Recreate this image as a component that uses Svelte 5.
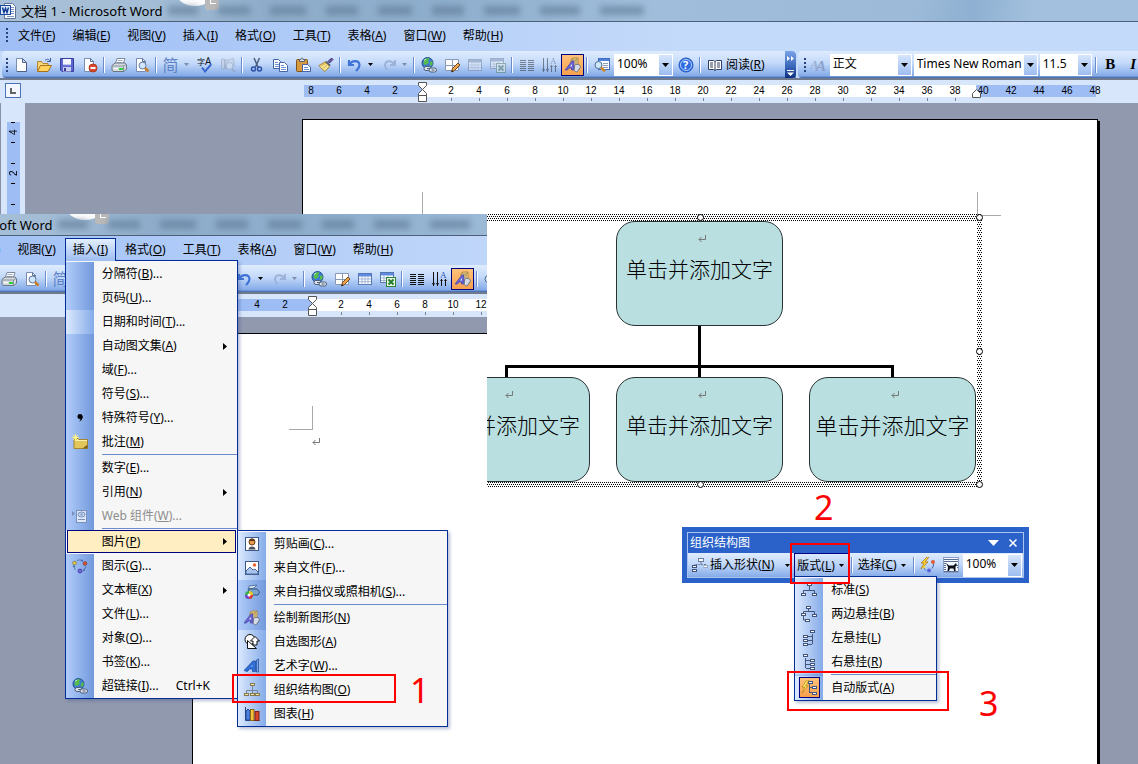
<script>
  const menus = [
    ['文件', 'F'], ['编辑', 'E'], ['视图', 'V'], ['插入', 'I'], ['格式', 'O'],
    ['工具', 'T'], ['表格', 'A'], ['窗口', 'W'], ['帮助', 'H']
  ];

  const pictureMenu = [
    { t: '剪贴画', k: 'C', s: '...', i: 'clipart' },
    { t: '来自文件', k: 'F', s: '...', i: 'picture' },
    { t: '来自扫描仪或照相机', k: 'S', s: '...', i: 'scanner', deep: true },
    { sep: true },
    { t: '绘制新图形', k: 'N', i: 'drawing', deep: true },
    { t: '自选图形', k: 'A', i: 'autoshape' },
    { t: '艺术字', k: 'W', s: '...', i: 'wordart' },
    { t: '组织结构图', k: 'O', i: 'org' },
    { t: '图表', k: 'H', i: 'chart' }
  ];

  const insertMenu = [
    { t: '分隔符', k: 'B', s: '...', deep: true },
    { t: '页码', k: 'U', s: '...', deep: true },
    { t: '日期和时间', k: 'T', s: '...' },
    { t: '自动图文集', k: 'A', arrow: true, deep: true },
    { t: '域', k: 'F', s: '...', deep: true },
    { t: '符号', k: 'S', s: '...', deep: true },
    { t: '特殊符号', k: 'Y', s: '...', i: 'comma', deep: true },
    { t: '批注', k: 'M', i: 'note', deep: true },
    { sep: true },
    { t: '数字', k: 'E', s: '...', deep: true },
    { t: '引用', k: 'N', arrow: true, deep: true },
    { t: 'Web 组件', k: 'W', s: '...', i: 'web', off: true, deep: true },
    { sep: true },
    { t: '图片', k: 'P', arrow: true, hot: true, sub: pictureMenu },
    { t: '图示', k: 'G', s: '...', i: 'diagram', deep: true },
    { t: '文本框', k: 'X', arrow: true, deep: true },
    { t: '文件', k: 'L', s: '...', deep: true },
    { t: '对象', k: 'O', s: '...', deep: true },
    { t: '书签', k: 'K', s: '...', deep: true },
    { t: '超链接', k: 'I', s: '...', i: 'link', key: 'Ctrl+K', deep: true }
  ];

  const layoutMenu = [
    { t: '标准', k: 'S', i: 'layStd' },
    { t: '两边悬挂', k: 'B', i: 'layBoth' },
    { t: '左悬挂', k: 'L', i: 'layLeft' },
    { t: '右悬挂', k: 'R', i: 'layRight' },
    { sep: true },
    { t: '自动版式', k: 'A', i: 'layAuto', on: true }
  ];

  const tools = [
    { i: 'new', l: '新建' }, { i: 'open', l: '打开' }, { i: 'save', l: '保存' }, { i: 'perm', l: '权限' }, '|',
    { i: 'print', l: '打印' }, { i: 'preview', l: '打印预览' }, '|',
    { i: 'simp', l: '简繁转换' }, { dd: true, off: true }, { i: 'spell', l: '拼写和语法' }, { i: 'research', l: '信息检索', off: true }, '|',
    { i: 'cut', l: '剪切' }, { i: 'copy', l: '复制' }, { i: 'paste', l: '粘贴' }, { i: 'brush', l: '格式刷' }, '|',
    { i: 'undo', l: '撤消' }, { dd: true }, { i: 'redo', l: '恢复' }, { dd: true, off: true }, '|',
    { i: 'link', l: '插入超链接' }, { i: 'tables', l: '表格和边框' },
    { i: 'table', l: '插入表格', edit: true }, { i: 'excel', l: '插入 Excel 工作表', edit: true }, '|',
    { i: 'columns', l: '分栏', edit: true }, { i: 'textdir', l: '更改文字方向', edit: true }, { i: 'drawing', l: '绘图', on: true }, '|',
    { i: 'docmap', l: '文档结构图' }
  ];

  const rulerMarks = Array.from({ length: 29 }, (_, n) => n * 2 - 8);
  const smudges = [30, 32, 36, 32, 34, 32, 36, 40, 44];

  const node = (x, y) => `<rect x="${x}.5" y="${y}.5" width="4" height="2" fill="#fff" stroke="#44557c"/>`;

  const icons = {
    word: '<path d="M4.500.5h8l3 3v12h-11z" fill="#fff" stroke="#5d7399"/><path d="M11 4.500h3M11 6.500h3M11 8.500h3M11 10.500h3M7 13.500h7" stroke="#7d98c8"/><rect x=".5" y="2.500" width="10" height="9" fill="#dfe9fa" stroke="#1c4a9c"/><path d="M2.500 4.500l1.500 5 1.500-4 1.500 4 1.500-5" fill="none" stroke="#123c94" stroke-width="1.500"/>',
    new: '<path d="M3.500 1.500h6l4 4v9h-10z" fill="#fff" stroke="#7a8db3"/><path d="M9.500 1.500v4h4z" fill="#c9d6ee" stroke="#566b93"/><path d="M4 14.500h9.500V6" fill="none" stroke="#4a5f8a"/>',
    open: '<path d="M1.500 14V4.500h4l1.500 2h5V9" fill="#f7d777" stroke="#b5832c"/><path d="M1.500 14.500l3-6h11l-3.500 6z" fill="#ffd35c" stroke="#a8721c"/><path d="M9 3.500c2-2 4-1.500 5 .5M14.500 1v3.500H11" fill="none" stroke="#3f5d9b"/>',
    save: '<path d="M1.500 1.500h13v13H3l-1.500-1.500z" fill="#5c66cf" stroke="#383c9d"/><rect x="4" y="2" width="8" height="6" fill="#f4f6ff"/><path d="M4 8h8" stroke="#8b96e4"/><rect x="4" y="10" width="8" height="4.500" fill="#c9cdf0"/><rect x="5" y="11" width="2" height="3" fill="#3b3f93"/>',
    perm: '<path d="M2.500 1.500h6l3 3v10h-9z" fill="#fff" stroke="#7a8db3"/><path d="M8.500 1.500v3h3" fill="none" stroke="#566b93"/><circle cx="11" cy="11" r="4" fill="#d8472b" stroke="#b5391f"/><rect x="8.500" y="10" width="5" height="2" fill="#fff"/>',
    print: '<path d="M4.500 6l1.500-4.500h8L12.500 6" fill="#fff" stroke="#7c89a3"/><path d="M6.500 3.500h5M6 5.500h5" stroke="#9eacc8"/><path d="M1 8.500L4 6h10l1.500 2v4L13 14.500H2L1 13z" fill="#d5dade" stroke="#6b7683"/><path d="M1.500 9h11l2.500-1.500M12.500 9v5" fill="none" stroke="#8b95a2"/><rect x="8" y="11" width="4" height="2" fill="#29d43a"/><path d="M3 11.500h4" stroke="#fff"/>',
    preview: '<path d="M2.500 1.500h6l3 3v10h-9z" fill="#fff" stroke="#7a8db3"/><path d="M8.500 1.500v3h3" fill="none" stroke="#566b93"/><circle cx="8.500" cy="8.500" r="3.500" fill="#cfe6fb" stroke="#62799f"/><path d="M11 11l3.500 3.500" stroke="#c47f28" stroke-width="2.500"/>',
    spell: '<text x="0" y="8" font-size="8" font-family="Noto Sans CJK SC" fill="#10151f">字</text><text x="8" y="8" font-size="10" font-family="Noto Sans" fill="#10151f">A</text><path d="M5 10.500l3 4 6-7" fill="none" stroke="#3a66cf" stroke-width="2"/>',
    research: '<path d="M1.500 2v10h3V2zM5.500 3v9h3V3z" fill="#b9cbe9" stroke="#7f97c3"/><path d="M9.500 2.500l4-1 1 8" fill="#b9cbe9" stroke="#7f97c3"/><circle cx="9.500" cy="9" r="3.500" fill="#d9e6fa" stroke="#8196bd"/><path d="M12 12l3 3" stroke="#8196bd" stroke-width="2"/>',
    cut: '<path d="M5 1l4 9M10.500 1l-4 9" stroke="#4a5c7c" stroke-width="1.500"/><circle cx="4.500" cy="12" r="2" fill="none" stroke="#2c4fa8" stroke-width="1.500"/><circle cx="10.500" cy="12" r="2" fill="none" stroke="#2c4fa8" stroke-width="1.500"/>',
    copy: '<path d="M1.500 2.500h5l2 2v7h-7z" fill="#fff" stroke="#4563a8"/><path d="M3 5.500h3M3 7.500h4M3 9.500h4" stroke="#6f92d8"/><path d="M7.500 5.500h5l3 3v6h-8z" fill="#fff" stroke="#4563a8"/><path d="M9 8.500h3M9 10.500h5M9 12.500h5" stroke="#6f92d8"/>',
    paste: '<rect x="1.500" y="2.500" width="11" height="12" rx="1" fill="#d79a3f" stroke="#7d531b"/><path d="M4.500 4.500v-2h1.500c0-2 2-2 2 0h1.500v2z" fill="#dfe3ea" stroke="#59616e"/><path d="M7.500 7.500h5l3 2.500v4.500h-8z" fill="#fff" stroke="#4563a8"/><path d="M9 10.500h4M9 12.500h5" stroke="#6f92d8"/>',
    brush: '<path d="M10 4.500L13.500 1l1.500 1.500L11.500 6z" fill="#6a56a5" stroke="#443778"/><path d="M7.500 4.500l4.500 4" stroke="#59657c" stroke-width="2"/><path d="M7 5l4.500 4.500L7 14.500C5 13 2.500 11 1 8.500z" fill="#f6e391" stroke="#a58636"/><path d="M3 9l5-3M5 11.500l4.500-4" stroke="#d1ad4e"/>',
    undo: '<path d="M2 3v5h5M2.500 7.500C5 3 12 3 12.500 8c0 3-2 4.500-3.500 6" fill="none" stroke="#3f74d6" stroke-width="2.200"/>',
    redo: '<path d="M14 3v5H9M13.500 7.500C11 3 4.500 3 4 8c0 2.500 1 3.500 2 5" fill="none" stroke="#9db2d8" stroke-width="2"/>',
    link: '<circle cx="6.500" cy="6" r="5.500" fill="#3f7bd0" stroke="#24508f"/><path d="M3 3c2-2.500 5-2 5.500-1L7 4l1 1.500L5 8 2.500 7zM9 5l2.500-1v4L9 9z" fill="#56bd4a"/><path d="M3 3.500l2-1.500" stroke="#d3f3cf"/><rect x="3" y="9.500" width="7" height="4" rx="2" fill="#dfe6ee" stroke="#4d5f78"/><rect x="8" y="11" width="7.500" height="4" rx="2" fill="#dfe6ee" stroke="#4d5f78"/><path d="M6 11.500h3M10.500 13h3" stroke="#4d5f78"/>',
    tables: '<path d="M1.500 2.500h13v11h-13zM1.500 8.500h13M8.500 2.500v11" fill="#fff" stroke="#8a99b5"/><path d="M7.500 15l1-3.500L14 6l2 2-5.500 5.500z" fill="#eda44a" stroke="#77471c"/><path d="M7.500 15l.5-2 1.500 1.500z" fill="#222"/>',
    table: '<rect x="1.500" y="2.500" width="13" height="11" fill="#fff" stroke="#5777b4"/><rect x="2" y="3" width="12" height="2.500" fill="#5e8ae0"/><path d="M2 8h12M2 10.700h12M5 5v8.500M8 5v8.500M11 5v8.500" stroke="#9fb5da"/>',
    excel: '<rect x=".5" y="1.500" width="13" height="10" fill="#fff" stroke="#5777b4"/><rect x="1" y="2" width="12" height="2.500" fill="#5e8ae0"/><path d="M1 7h12M1 9.500h12M4 4v7M8 4v7" stroke="#9fb5da"/><rect x="6.500" y="6.500" width="9" height="9" fill="#e6f5e2" stroke="#2f8438"/><path d="M8.500 8.500l5 5M13.500 8.500l-5 5" stroke="#1f7a2b" stroke-width="1.800"/>',
    columns: '<path d="M1 3.500h6M1 5.500h6M1 7.500h6M1 9.500h6M1 11.500h6M1 13.500h6M9 3.500h6M9 5.500h6M9 7.500h6M9 9.500h6M9 11.500h6M9 13.500h6" stroke="#111"/>',
    textdir: '<path d="M1.500 1v14M5.500 1v14M9.500 8v7M13.500 8v7" stroke="#111"/><path d="M0 12h3l-1.500 3zM4 12h3l-1.500 3zM8 10h3L9.500 8zM12 10h3l-1.500-2z" fill="#111"/><text x="8" y="7" font-size="9" font-family="Liberation Serif" fill="#2d55b8">A</text>',
    drawing: '<path d="M6 2.500l2-1.500h5v6l-2 2H6z" fill="#f3d892" stroke="#a8884a"/><path d="M6 3h5v5M11 3l2-2" fill="none" stroke="#a8884a"/><path d="M0 13L7 4h2v9H6.500v-2H4l-1.500 2z" fill="#6a66d0" stroke="#4540a8" stroke-width=".7"/><path d="M5 9.500l2-2.500v2.500z" fill="#dcdcff"/><path d="M9.500 8.500c2-2 6-1 6 1.500l-3 4.500c-2 1-4-1-3-3z" fill="#d5dbe6" stroke="#6c7588"/>',
    docmap: '<rect x="4.500" y="1.500" width="11" height="11" fill="#fff" stroke="#3e6cbb"/><rect x="5" y="2" width="10" height="2" fill="#4f82dc"/><path d="M9 6.500h5M9 8.500h5M9 10.500h5" stroke="#8b9cbd"/><circle cx="4.500" cy="8" r="3.500" fill="#cfeaf7" stroke="#4a6b94"/><path d="M7 10.500l4 4" stroke="#cf8a2a" stroke-width="2.500"/>',
    help: '<circle cx="8" cy="8" r="7" fill="#2d6be0" stroke="#2458c0"/><circle cx="8" cy="8" r="5.500" fill="none" stroke="#b5d0fb"/><text x="5" y="12" font-size="11" font-weight="700" font-family="Noto Sans" fill="#fff">?</text>',
    book: '<path d="M1.500 3.500h5l1.500 1 1.500-1h5v9h-5l-1.500 1-1.500-1h-5z" fill="#fff" stroke="#2e3f63"/><path d="M8 4.500v9M3 6h3M3 8h3M3 10h3M10 6h3M10 8h3M10 10h3" stroke="#2e3f63"/>',
    styles: '<text x="0" y="12" font-size="13" font-style="italic" font-weight="700" font-family="Liberation Serif" fill="#98add3">A</text><text x="6" y="14" font-size="15" font-style="italic" font-weight="700" font-family="Liberation Serif" fill="#8ba1c9">A</text>',
    clipart: '<rect x="1.500" y="1.500" width="13" height="13" fill="#fff" stroke="#3d5888"/><path d="M4.500 13.500c0-4 7-4 7 0z" fill="#4b4f5a"/><circle cx="8" cy="6" r="3" fill="#e59a4e" stroke="#6c3e18"/><path d="M5 5c0-3.500 6-3.500 6 0z" fill="#5d3718"/>',
    picture: '<rect x="1.500" y="1.500" width="13" height="13" fill="#fff" stroke="#3d5888"/><path d="M2 14V11l4-4 3 3 2-1 3 3v2z" fill="#a9c3ec" stroke="#4c6ba2"/><circle cx="10.500" cy="5" r="1.700" fill="#e8642d"/>',
    scanner: '<path d="M5 2l8-1-3 3-5 1z" fill="#dce8f5" stroke="#53749d"/><path d="M4 5h9l2.500 3-1.500 3H7z" fill="#7ba5cf" stroke="#31547e"/><circle cx="5" cy="11" r="4" fill="#36ad50"/><path d="M5 7a4 4 0 0 1 4 4H5z" fill="#e8c928"/><path d="M9 11a4 4 0 0 1-4 4v-4z" fill="#db3a46"/><path d="M5 15a4 4 0 0 1-4-4h4z" fill="#7146cf"/><circle cx="5" cy="11" r="1.500" fill="#fff"/>',
    autoshape: '<circle cx="6" cy="5.500" r="5" fill="#fff" stroke="#111"/><path d="M3.500 6.500l9 8h-9z" fill="#fff" stroke="#111"/><path d="M11 2.500L15.500 7H13v4H9V7H6.500z" fill="#fff" stroke="#111"/>',
    wordart: '<path d="M0 12.500L9 3h2.500v10.500H8.500v-2.500H5.500l-2 2.500z" fill="#2f6fd6" stroke="#1a4596" stroke-width=".7"/><path d="M7 8.500L8.500 7v1.500z" fill="#d8e8ff"/><path d="M12.500 2l2-1v13h-2z" fill="#77a6ec" stroke="#1a4596" stroke-width=".7"/>',
    org: '<path d="M8.500 4v4M2.500 11V8.500h11V11M8.500 8v3" fill="none" stroke="#7686a2"/><rect x="6.500" y="1.500" width="4" height="2" fill="#f5e5a0" stroke="#857a4f"/><rect x=".5" y="11.500" width="4" height="2" fill="#f5e5a0" stroke="#857a4f"/><rect x="6.500" y="11.500" width="4" height="2" fill="#f5e5a0" stroke="#857a4f"/><rect x="11.500" y="11.500" width="4" height="2" fill="#f5e5a0" stroke="#857a4f"/>',
    chart: '<path d="M1.500 1v13.500h14" fill="none" stroke="#2c437a"/><path d="M2 5l2-2 2 2v9H2z" fill="#4b80de" stroke="#23489a"/><rect x="6.500" y="3.500" width="3.500" height="11" fill="#f2c63c" stroke="#8d6918"/><rect x="11" y="5.500" width="4" height="9" fill="#d8442b" stroke="#7e2012"/>',
    comma: '<circle cx="8" cy="6.500" r="2.500"/><path d="M10.500 6c.5 3-1 4.500-3.500 5.500 1.500-1.500 2-3 1.500-4.500z"/>',
    note: '<path d="M2 4.500h4l1 1h8.500V14.500H2z" fill="#e3c659" stroke="#a3872e"/><path d="M3 6.500h12" stroke="#fbf0ac"/><path d="M10.500 14.500l5-4v4z" fill="#7c641a"/><path d="M3.500 0v7M0 3.500h7M1 1l5 5M6 1L1 6" stroke="#fdf08a"/>',
    web: '<path d="M0 3l3 2.500L0 8z" fill="#7790c0"/><rect x="4.500" y="2.500" width="10" height="12" fill="#dfe9f9" stroke="#7990bb"/><ellipse cx="9.500" cy="6.500" rx="3.500" ry="2.500" fill="#c3d3ee" stroke="#7990bb"/><circle cx="9.500" cy="6.500" r="1" fill="#7990bb"/><path d="M6 11.500h7" stroke="#7990bb"/>',
    diagram: '<path d="M5 2.500a6 6 0 0 1 5 0M14 8a6 6 0 0 1-2 4M3.500 12a6 6 0 0 1-1.500-4" fill="none" stroke="#5d7cb4"/><path d="M9.500 1v3l2-1zM12.500 10v3h-2zM0.500 9l1.500-2 1.500 2z" fill="#3d64a8"/><circle cx="2.500" cy="5" r="1.800" fill="#e8d24a" stroke="#78682a" stroke-width=".7"/><circle cx="13" cy="5.500" r="1.800" fill="#e05a38" stroke="#802a18" stroke-width=".7"/><circle cx="8" cy="13" r="2" fill="#6e66e0" stroke="#37309a" stroke-width=".7"/>',
    shape: '<rect x="6.500" y="1.500" width="5" height="3" fill="#fff" stroke="#6b7c9d"/><path d="M9 5v2.500H2.500V10M9 7.500h5V10" fill="none" stroke="#6b7c9d" stroke-dasharray="2 1"/><rect x="12" y="8.500" width="3.500" height="2" fill="#fff" stroke="#9aa9c6"/><rect x=".5" y="8.500" width="4" height="2" fill="#fff" stroke="#44557c"/><rect x=".5" y="12.500" width="4" height="2" fill="#fff" stroke="#44557c"/>',
    layStd: '<path d="M8.500 4v4M2.500 11V8.500h11V11" fill="none" stroke="#44557c"/>' + node(6, 1) + node(0, 11) + node(11, 11),
    layBoth: '<path d="M7.500 3v3M2.500 7V5.500h11V8M2.500 10v4h2" fill="none" stroke="#44557c"/>' + node(5, 0) + node(0, 7) + node(11, 8) + node(4, 13),
    layLeft: '<path d="M11.500 4v10M6 6.500h5M6 10.500h5M6 14.500h5" fill="none" stroke="#44557c"/>' + node(9, 0) + node(2, 5) + node(2, 9) + node(2, 13),
    layRight: '<path d="M4.500 4v10M5 6.500h5M5 10.500h5M5 14.500h5" fill="none" stroke="#44557c"/>' + node(2, 0) + node(9, 5) + node(9, 9) + node(9, 13),
    layAuto: '<path d="M8.500 4v9M9 7.500h3M9 12.500h3" fill="none" stroke="#44557c"/>' + node(7, 1) + node(11, 6) + node(11, 12) + '<path d="M6 0L1 7h3l-3 6 6-7H4.500L8 0z" fill="#fff36b" stroke="#ad7d10" stroke-width=".7"/>',
    autofmt: '<path d="M7 0L1 6h3L1 12l7-7H5l4-5z" fill="#ffd83d" stroke="#b07412" stroke-width=".8"/><path d="M13.500 7a6 6 0 0 1-1.500 4.500M4 10.500a5 5 0 0 0 2 3" fill="none" stroke="#3d64a8"/><circle cx="13" cy="5" r="2" fill="#dd5c38"/><circle cx="9" cy="13.500" r="2" fill="#5c62dd"/><circle cx="4" cy="10" r="1.500" fill="#e8d24a"/>',
    wrap: '<rect x=".5" y=".5" width="15" height="15" fill="#f3f7ff" stroke="#8aa0c8"/><path d="M1 2.500h14M1 4.500h14M1 6.500h2M1 8.500h2M1 10.500h2M14 8.500h1M14 10.500h1M1 14.500h14M1 12.500h2" stroke="#5b6d94"/><path d="M3 6l3 2.500h4.500L13 6l1 2.500-1.500 1V14H11l-.5-2.500H7L6 14H4.500l.5-4z" fill="#0b0f18"/>'
  };
</script>

{#snippet icon(name)}
  <svg class="ico" viewBox="0 0 16 16" aria-hidden="true">{@html icons[name]}</svg>
{/snippet}

{#snippet label(t, k, s)}<span>{t}(<u>{k}</u>){s ?? ''}</span>{/snippet}

{#snippet down()}
  <svg class="down" viewBox="0 0 5 3" aria-hidden="true"><path d="M0 0h5L2.500 3z" fill="currentColor" /></svg>
{/snippet}

{#snippet combo(kind, value, name)}
  <span class="combo {kind}">
    <select aria-label={name}><option>{value}</option></select>
    <span class="combo-arrow"><svg viewBox="0 0 7 4" aria-hidden="true"><path d="M0 0h7L3.500 4z" /></svg></span>
  </span>
{/snippet}

{#snippet popup(items, kind)}
  <ul class="popup {kind}">
    {#each items as m}
      {#if m.sep}
        <li class="rule"></li>
      {:else}
        <li class="entry">
          <button class="row" class:hot={m.hot} class:deep={m.deep} disabled={m.off}>
            <span class="gutter">
              {#if m.i}<span class="cell" class:on={m.on}>{@render icon(m.i)}</span>{/if}
            </span>
            {@render label(m.t, m.k, m.s)}
            {#if m.key}<span class="key">{m.key}</span>{/if}
            {#if m.arrow}<svg class="more" viewBox="0 0 4 7" aria-hidden="true"><path d="M0 0l4 3.500L0 7z" /></svg>{/if}
          </button>
          {#if m.sub}{@render popup(m.sub, 'flyout')}{/if}
        </li>
      {/if}
    {/each}
  </ul>
{/snippet}

{#snippet mark(kind)}
  <svg class="return {kind}" viewBox="0 0 8 8" aria-hidden="true"><path d="M7.500 0v4.500H1M3.500 2L1 4.500 3.500 7" fill="none" stroke="#777" /></svg>
{/snippet}

{#snippet box(big)}
  <div class="box" class:big>
    {@render mark('inbox')}
    <span>单击并添加文字</span>
  </div>
{/snippet}

{#snippet wordWindow(front)}
  <section class="window">
    <header class="title">
      {@render icon('word')}
      <h1>文档 1 - Microsoft Word</h1>
      <span class="blob"></span>
      <span class="chip"></span>
      <span class="smudges">
        {#each smudges as w}<i style="width:{w}px"></i>{/each}
      </span>
    </header>
    <nav class="menubar">
      <span class="grip"></span>
      {#each menus as [t, k]}
        <div class="menu">
          <button class="head" class:open={front && k === 'I'}>{@render label(t, k)}</button>
          {#if front && k === 'I'}{@render popup(insertMenu, 'insert')}{/if}
        </div>
      {/each}
    </nav>
    <div class="bars">
      <div class="bar" role="toolbar">
        <span class="grip"></span>
        {#each tools as b}
          {#if b === '|'}
            <span class="split"></span>
          {:else if b.dd}
            <button class="dd" class:off={b.off} aria-label="更多">{@render down()}</button>
          {:else}
            <button class="tool" class:on={b.on} class:off={b.off || (b.edit && !front)} aria-label={b.l}>
              {#if b.i === 'simp'}<span class="simp">简</span>{:else}{@render icon(b.i)}{/if}
            </button>
          {/if}
        {/each}
        {@render combo('zoom', '100%', '显示比例')}
        <button class="tool" aria-label="帮助">{@render icon('help')}</button>
        <span class="split"></span>
        <button class="read">{@render icon('book')}{@render label('阅读', 'R')}</button>
        <button class="overflow" aria-label="工具栏选项">
          <svg viewBox="0 0 11 27" aria-hidden="true"><path d="M2 5l3 2.500L2 10zM6 5l3 2.500L6 10zM2 19h7v1H2zM2 21.500h7L5.500 25z" fill="#fff" /></svg>
        </button>
      </div>
      <div class="bar last" role="toolbar">
        <span class="grip"></span>
        <button class="tool" aria-label="格式窗格">{@render icon('styles')}</button>
        {@render combo('style', '正文', '样式')}
        {@render combo('font', 'Times New Roman', '字体')}
        {@render combo('size', '11.5', '字号')}
        <span class="split"></span>
        <button class="tool bold">B</button>
        <button class="tool italic">I</button>
      </div>
    </div>
    <div class="ruler">
      <button class="tab" aria-label="制表符"></button>
      <ol>
        {#each rulerMarks as n}
          <li class:tick={n > 0 && n < 40}>
            {#if n !== 0}{Math.abs(n)}{:else}
              <svg class="glass" viewBox="0 0 10 20" aria-hidden="true">
                <path d="M.5.5h8v3l-4 4-4-4zM4.500 7.500l4 4v2h-8v-2zM.5 13.500h8v6h-8z" fill="#fff" stroke="#555" />
              </svg>
            {/if}
            {#if n === 40}
              <svg class="stop" viewBox="0 0 9 9" aria-hidden="true"><path d="M.5 8.500V4.500l4-4 4 4v4z" fill="#fff" stroke="#555" /></svg>
            {/if}
          </li>
        {/each}
      </ol>
    </div>
    <div class="work">
      <div class="vruler">
        <div class="scale"><b>4</b><b>2</b><b></b></div>
      </div>
      <div class="desk">
        <article class="page">
          <i class="crop left"></i>
          <i class="crop right"></i>
          {#if front}
            {@render mark('para')}
          {:else}
            <div class="canvas">
              <svg class="hatch" viewBox="0 0 562 274" shape-rendering="crispEdges" aria-hidden="true">
                <defs>
                  <pattern id="dots" width="2" height="4" patternUnits="userSpaceOnUse">
                    <rect width="1" height="1" /><rect x="1" y="2" width="1" height="1" />
                  </pattern>
                </defs>
                <path d="M0 0h562v274H0v-7h557V7H0z" fill="url(#dots)" />
              </svg>
              <div class="tree">
                <div class="tier">{@render box(false)}</div>
                <svg class="wires" viewBox="0 0 553 51" aria-hidden="true">
                  <path d="M276.500 0v51M83.500 51V40.500h386v10.500" fill="none" stroke="#000" stroke-width="3" />
                </svg>
                <div class="tier">{@render box(false)}{@render box(false)}{@render box(true)}</div>
              </div>
              <i class="knob n"></i><i class="knob ne"></i><i class="knob e"></i><i class="knob se"></i><i class="knob s"></i>
            </div>
          {/if}
        </article>
      </div>
    </div>
  </section>
{/snippet}

<main>
  {@render wordWindow(false)}
  <div class="front">{@render wordWindow(true)}</div>

  <section class="float">
    <header>
      <h2>组织结构图</h2>
      <svg class="opts" viewBox="0 0 11 6" aria-hidden="true"><path d="M0 0h11L5.500 6z" fill="#fff" /></svg>
      <button class="close" aria-label="关闭"><svg viewBox="0 0 8 8" aria-hidden="true"><path d="M.5.5l7 7M7.500.5l-7 7" stroke="#fff" stroke-width="1.500" /></svg></button>
    </header>
    <div class="float-row">
      <button class="cmd wide">{@render icon('shape')}{@render label('插入形状', 'N')}{@render down()}</button>
      <div class="menu">
        <button class="cmd open">{@render label('版式', 'L')}{@render down()}</button>
        {@render popup(layoutMenu, 'layout')}
      </div>
      <span class="split"></span>
      <button class="cmd">{@render label('选择', 'C')}{@render down()}</button>
      <span class="split"></span>
      <button class="tool" aria-label="自动套用格式">{@render icon('autofmt')}</button>
      <button class="tool" aria-label="文字环绕">{@render icon('wrap')}</button>
      {@render combo('fzoom', '100%', '缩放')}
    </div>
  </section>

  <i class="ring one"></i><b class="step one">1</b>
  <i class="ring two"></i><b class="step two">2</b>
  <i class="ring three"></i><b class="step three">3</b>
</main>

<style>
  :global(body) { margin: 0; }
  main, main :global(*) { box-sizing: border-box; }
  main {
    position: relative;
    height: 100vh;
    overflow: hidden;
    font: 12px/16px "Noto Sans", "Noto Sans CJK SC", sans-serif;
    color: #000;
  }
  button {
    border: 0;
    padding: 0;
    margin: 0;
    background: none;
    font: inherit;
    color: inherit;
    white-space: nowrap;
  }
  h1, h2 { margin: 0; font: inherit; white-space: nowrap; }
  ul, ol { margin: 0; padding: 0; list-style: none; }
  u { text-underline-offset: 1px; text-decoration-thickness: 1px; }
  svg { display: block; flex: none; }
  .ico { width: 16px; height: 16px; }
  .down { width: 5px; height: 3px; }

  .window {
    display: flex;
    flex-direction: column;
    height: 100%;
    background: #d8e6fb;
  }

  .title {
    position: relative;
    display: flex;
    align-items: center;
    gap: 5px;
    height: 22px;
    overflow: hidden;
    border-bottom: 1px solid #4d6079;
    background: linear-gradient(100deg, #a9c1d8 0, #a3bdd6 150px, #8fadcb 260px, #8eaecd 440px, #a0bedb 640px, #9dbbd9 900px, #8fb0d2 960px, #a3c1de 1020px);
  }
  .title h1 { font-size: 13px; }
  .blob {
    position: absolute;
    left: 176px;
    top: -22px;
    width: 38px;
    height: 28px;
    border-radius: 50%;
    background: #fdfdfd;
  }
  .chip {
    position: absolute;
    left: 205px;
    top: -4px;
    width: 14px;
    height: 14px;
    border-radius: 3px;
    background: #b9b9b9;
  }
  .chip::after {
    content: "";
    position: absolute;
    left: 5px;
    top: 2px;
    width: 5px;
    height: 5px;
    border: solid #fff;
    border-width: 0 0 1px 1px;
  }
  .smudges {
    display: flex;
    gap: 20px;
    filter: blur(3px);
  }
  .smudges i { height: 9px; background: #5b7893; opacity: .6; }

  .menubar {
    display: flex;
    align-items: flex-start;
    gap: 1px;
    height: 29px;
    padding: 2px 0 0 4px;
    background: linear-gradient(90deg, #9ebef5, #c4dafa 60%, #c4dafa);
  }
  .grip {
    flex: none;
    width: 5px;
    height: 14px;
    background: repeating-linear-gradient(#27417a 0 2px, transparent 2px 4px) 2px 0 / 2px 100% no-repeat;
  }
  .menubar .grip { margin-top: 4px; }
  .menu { position: relative; }
  .head { height: 23px; padding: 0 7px; border: 1px solid transparent; }
  .head.open {
    position: relative;
    z-index: 12;
    border-color: #002d96;
    border-bottom: 0;
    background: linear-gradient(#e3effe, #9dbdf0);
  }

  .bars { display: flex; height: 29px; border-bottom: 2px solid #6f7a8c; background: #c4dafa; }
  .bar {
    display: flex;
    align-items: center;
    height: 27px;
    padding-left: 2px;
    margin-left: 2px;
    border-radius: 4px 0 0 4px;
    background: linear-gradient(#dfecfe, #c3d9fa 45%, #84abe8 92%, #3b62a5);
  }
  .bar.last { flex: 1; padding-left: 4px; overflow: hidden; }
  .tool {
    flex: none;
    display: flex;
    align-items: center;
    justify-content: center;
    width: 23px;
    height: 22px;
  }
  .tool.on, .cell.on { border: 1px solid #000080; background: linear-gradient(#ffc27a, #f7a04d); }
  .tool.off .ico { filter: grayscale(.6); opacity: .45; }
  .simp { font-size: 16px; line-height: 20px; color: #5f83c6; }
  .dd { flex: none; width: 11px; height: 22px; padding-left: 2px; }
  .off { color: #7d8ba8; }
  .split {
    flex: none;
    width: 6px;
    height: 16px;
    background: linear-gradient(90deg, transparent 2px, #6a8ccb 2px 3px, #fff 3px 4px, transparent 4px);
  }
  .read { display: flex; align-items: center; gap: 3px; height: 22px; padding: 0 20px 0 4px; }
  .overflow {
    width: 11px;
    height: 27px;
    border-radius: 0 4px 4px 0;
    background: linear-gradient(#7aa3ea, #3663b5 60%, #0b2f80);
  }
  .overflow svg { width: 11px; height: 27px; }

  .combo { display: grid; flex: none; height: 22px; background: #fff; }
  .combo select {
    grid-area: 1 / 1;
    min-width: 0;
    appearance: none;
    border: 1px solid #fff;
    border-radius: 0;
    padding: 0 15px 2px 2px;
    background: #fff;
    font: inherit;
    color: #000;
    text-overflow: clip;
  }
  .combo-arrow {
    grid-area: 1 / 1;
    justify-self: end;
    display: flex;
    align-items: center;
    justify-content: center;
    width: 13px;
    margin: 1px;
    background: linear-gradient(#d6e5fc, #9dbdf0);
    pointer-events: none;
  }
  .combo-arrow svg { width: 7px; height: 4px; }
  .zoom { width: 59px; margin: 0 1px; }
  .style { width: 82px; margin-right: 2px; }
  .font { width: 124px; margin-right: 2px; }
  .size { width: 52px; margin-right: 1px; }
  .bold, .italic { font: 700 15px "Liberation Serif", serif; }
  .italic { font-style: italic; }

  .ruler {
    display: flex;
    align-items: flex-start;
    height: 23px;
    padding: 3px 0 0 5px;
    overflow: hidden;
  }
  .tab {
    flex: none;
    width: 16px;
    height: 15px;
    border: 1px solid #4a72b8;
    background: linear-gradient(#666, #666) 4px 4px / 2px 6px no-repeat, linear-gradient(#666, #666) 4px 8px / 6px 2px no-repeat, #f1f6ff;
  }
  .ruler ol {
    display: flex;
    flex: none;
    margin: 2px 0 0 276px;
    font: 10px/12px "Liberation Sans", sans-serif;
    background: linear-gradient(90deg, transparent 7px, #9ebdf5 7px 126px, #fff 126px 679px, #9ebdf5 679px 799px, transparent 799px) 0 0 / 100% 12px no-repeat;
  }
  .ruler li { position: relative; width: 28px; height: 18px; text-align: center; }
  .tick::after {
    content: "";
    display: block;
    width: 1px;
    height: 3px;
    margin: 1px auto 0;
    background: #7b8494;
  }
  .glass { position: absolute; left: 9px; top: -3px; width: 10px; height: 20px; }
  .stop { position: absolute; left: 3px; top: 4px; width: 9px; height: 9px; }

  .work { display: flex; flex: 1; min-height: 0; }
  .vruler {
    flex: none;
    width: 25px;
    padding: 19px 5px 0 6px;
    border-left: 1px solid #8791a5;
  }
  .scale {
    display: flex;
    flex-direction: column;
    gap: 20px;
    height: 100%;
    width: 13px;
    overflow: hidden;
    background: #9ebdf5;
    font: 10px/12px "Liberation Sans", sans-serif;
  }
  .scale b {
    display: flex;
    align-items: center;
    justify-content: center;
    flex: none;
    height: 21px;
    font-weight: 400;
    writing-mode: vertical-rl;
    transform: rotate(180deg);
    background: linear-gradient(#000, #000) center top / 4px 1px no-repeat, linear-gradient(#000, #000) center bottom / 4px 1px no-repeat;
  }
  .desk { flex: 1; padding: 16px 0 0 277px; background: #9199ae; overflow: hidden; }
  .page {
    position: relative;
    width: 796px;
    height: 100%;
    padding: 94px 0 0 117px;
    border: solid #000;
    border-width: 1px 1px 0 1px;
    background: #fff;
    box-shadow: 2px 2px 0 #000;
  }
  .crop { position: absolute; top: 72px; width: 24px; height: 24px; border: 0 solid #a9a9a9; border-bottom-width: 1px; }
  .crop.left { left: 96px; border-right-width: 1px; }
  .crop.right { left: 674px; border-left-width: 1px; }
  .return { width: 8px; height: 8px; }
  .para { margin: 10px 0 0 2px; }
  .inbox { margin-left: 5px; }

  .canvas {
    position: relative;
    width: 562px;
    height: 274px;
    padding: 7px 0 0 3px;
  }
  .tree { position: relative; width: 553px; }
  .tier { display: flex; justify-content: center; gap: 26px; }
  .wires { width: 553px; height: 51px; }
  .box {
    display: flex;
    flex-direction: column;
    align-items: center;
    gap: 11px;
    flex: none;
    width: 167px;
    height: 105px;
    padding: 13px 0 0;
    border: 1px solid #2a3334;
    border-radius: 19px;
    background: #b9dfe1;
    font: 300 21px/28px "Noto Sans CJK SC", sans-serif;
    white-space: nowrap;
  }
  .box.big { font-size: 22px; }
  .hatch { position: absolute; left: 0; top: 0; width: 562px; height: 274px; }
  .knob { position: absolute; width: 7px; height: 7px; border: 1px solid #000; border-radius: 50%; background: #fff; }
  .n, .ne { top: 0; }
  .s, .se { bottom: 0; }
  .n, .s { left: 277px; }
  .ne, .e, .se { right: -1px; }
  .e { top: 134px; }

  .front {
    position: absolute;
    left: 0;
    top: 214px;
    bottom: 0;
    width: 487px;
    overflow: hidden;
  }
  .front .window { width: 100vw; margin-left: -110px; }

  .popup {
    position: absolute;
    z-index: 10;
    padding-top: 1px;
    border: 1px solid #002d96;
    background: #f6f6f6;
    box-shadow: 2px 2px 3px rgb(60 80 140 / .35);
  }
  .insert { left: 0; top: 22px; width: 173px; }
  .flyout { left: 100%; top: 0; width: 211px; }
  .layout { left: 0; top: 23px; width: 143px; }
  .entry { position: relative; }
  .row { display: flex; align-items: center; width: 100%; height: 24px; text-align: left; }
  .gutter {
    display: flex;
    align-items: center;
    justify-content: center;
    width: 28px;
    height: 24px;
    margin-right: 8px;
    background: linear-gradient(90deg, #dbe9fe, #85abe8);
  }
  .deep .gutter { background: linear-gradient(90deg, #b0ccfa, #7299dc); }
  .cell { display: flex; align-items: center; justify-content: center; width: 21px; height: 21px; }
  .row:disabled { color: #8d8d8d; }
  .hot { width: 169px; height: 23px; margin: 0 1px 1px; border: 1px solid #000080; background: #ffeec2; }
  .hot .gutter { width: 26px; height: 20px; background: none; }
  .key { margin-left: 17px; }
  .more { width: 4px; height: 7px; margin: 0 10px 0 auto; }
  .hot .more { margin-right: 8px; }
  .rule { height: 2px; background: linear-gradient(#6a8ccb, #6a8ccb) 36px 0 / 100% 1px no-repeat, linear-gradient(90deg, #b0ccfa, #7299dc) 0 0 / 28px 2px no-repeat; }

  .float {
    position: absolute;
    left: 682px;
    top: 527px;
    width: 347px;
    padding: 5px;
    background: #2a62c9;
  }
  .float header {
    display: flex;
    align-items: center;
    height: 21px;
    padding: 0 6px 0 2px;
    border: 1px solid #a9c4ef;
    border-bottom: 0;
    color: #fff;
  }
  .opts { width: 11px; height: 6px; margin: 0 10px 0 auto; }
  .close svg { width: 8px; height: 8px; }
  .float-row {
    display: flex;
    align-items: center;
    height: 25px;
    padding: 0 2px 0 4px;
    border: solid #a9c4ef;
    border-width: 0 1px 1px;
    background: linear-gradient(#dfecfe, #c3d9fa 45%, #84abe8);
  }
  .cmd { display: flex; align-items: center; gap: 4px; height: 25px; padding: 0 4px 0 2px; border: 1px solid transparent; }
  .cmd.wide { gap: 2px; padding: 0 4px 0 0; border: 0; }
  .cmd.wide .down { margin-left: 9px; }
  .cmd.open { border-color: #000080; border-bottom: 0; background: linear-gradient(#dbe9fd, #8fb2ea); }

  .fzoom { width: 59px; margin-left: auto; height: 23px; }

  .ring { position: absolute; border: 2px solid #f00; z-index: 20; }
  .ring.one { left: 232px; top: 674px; width: 164px; height: 29px; }
  .ring.two { left: 790px; top: 543px; width: 60px; height: 41px; }
  .ring.three { left: 787px; top: 671px; width: 162px; height: 40px; }
  .step { position: absolute; z-index: 20; font: 400 34px/34px "Noto Sans", sans-serif; color: #f00; }
  .step.one { left: 410px; top: 673px; }
  .step.two { left: 814px; top: 490px; }
  .step.three { left: 979px; top: 686px; }
</style>
